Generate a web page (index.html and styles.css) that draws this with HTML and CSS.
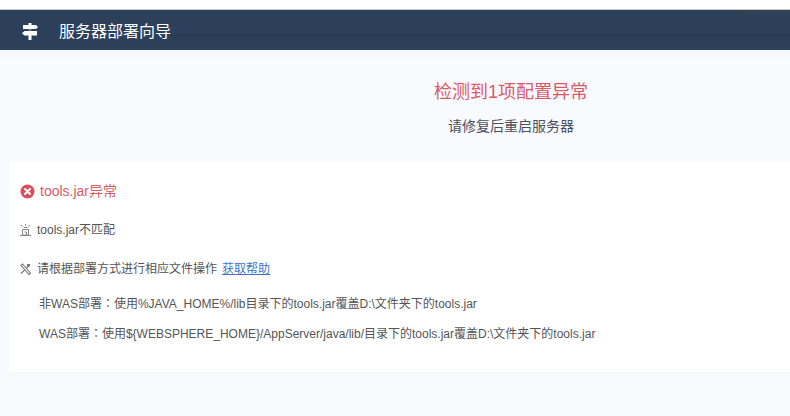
FILE: index.html
```html
<!DOCTYPE html>
<html lang="zh-CN">
<head>
    <meta charset="UTF-8">
    <meta name="viewport" content="width=device-width, initial-scale=1.0">
    <title>服务器部署向导</title>
    <link rel="stylesheet" href="styles.css">
</head>
<body>
    <header class="top-bar">
        <svg class="top-icon" width="16" height="17" viewBox="0 0 16 17">
            <path d="M6.500 0h3v2H14l2 2-2 2H9.500v2H15v4.500H9.500V17h-3v-4.500H2.500L0 10.250 2.500 8h4V6H1V2h5.500z" fill="#fff"/>
            <path d="M0 7h16" stroke="#2c3f5b" stroke-width="1.400"/>
        </svg>
        <span class="top-title">服务器部署向导</span>
    </header>

    <main class="page">
        <section class="summary">
            <h1>检测到1项配置异常</h1>
            <p>请修复后重启服务器</p>
        </section>

        <section class="detail-card">
            <h2 class="error-title">
                <svg width="15" height="15" viewBox="0 0 15 15">
                    <circle cx="7.500" cy="7.500" r="7" fill="#d9505c"/>
                    <path d="M5 5l5 5M10 5l-5 5" stroke="#fff" stroke-width="2" stroke-linecap="round"/>
                </svg>
                tools.jar异常
            </h2>

            <div class="info-row">
                <svg class="row-icon" width="11" height="12" viewBox="0 0 11 12">
                    <path d="M5.500 0v1.500M1 1l1.500 1.500M10 1L8.500 2.500M3.500 3.500h4M2.500 5.500h6V11h-6zM4.500 8h2v3M0 11.500h11" stroke="#888" stroke-width="1" fill="none"/>
                </svg>
                <span>tools.jar不匹配</span>
            </div>

            <div class="info-row">
                <svg class="row-icon" width="11" height="12" viewBox="0 0 11 12">
                    <path d="M1 2.500L2.500 1l8 9-1.500 1.500zM10 1.500L6.500 5M4.500 7L1 10.500" stroke="#777" stroke-width="1.100" fill="none"/>
                    <path d="M7 1h3v2.500H7z" fill="#8a7078"/>
                </svg>
                <span>请根据部署方式进行相应文件操作</span>
                <a href="#" class="help-link">获取帮助</a>
            </div>

            <p class="step first">非WAS部署<span class="colon" lang="zh-TW">：</span>使用%JAVA_HOME%/lib目录下的tools.jar覆盖D:\文件夹下的tools.jar</p>
            <p class="step">WAS部署<span class="colon" lang="zh-TW">：</span>使用${WEBSPHERE_HOME}/AppServer/java/lib/目录下的tools.jar覆盖D:\文件夹下的tools.jar</p>
        </section>
    </main>
</body>
</html>
```

FILE: styles.css
```css
* {
    box-sizing: border-box;
}

body {
    margin: 0;
    height: 416px;
    overflow: hidden;
    background-color: #f8f9fc;
    font-family: "Liberation Sans", "Noto Sans CJK SC", sans-serif;
    font-size: 12px;
    color: #555;
    display: flex;
    flex-direction: column;
    padding-top: 9px;
    background-image: linear-gradient(#fff 9px, transparent 9px);
}

.top-bar {
    position: relative;
    height: 41px;
    flex-shrink: 0;
    border-top: 1px solid #c9cbce;
    background-color: #2c3f5b;
    display: flex;
    align-items: center;
    padding-left: 22px;
}

/* thin line across the bar, after the title */
.top-bar::after {
    content: "";
    position: absolute;
    left: 170px;
    right: 0;
    top: 25px;
    height: 1px;
    background-color: #273750;
}

/* darker strip at the top right of the bar */
.top-bar::before {
    content: "";
    position: absolute;
    left: 737px;
    right: 0;
    top: 0;
    height: 3px;
    background-color: #343f50;
}

.top-icon {
    margin-top: 3px;
    margin-right: 21px;
}

.top-title {
    color: #fff;
    font-size: 16px;
}

.page {
    flex: 1;
}

.summary {
    height: 112px;
    padding-top: 29px;
    padding-left: 232px;
    text-align: center;
    background-color: #f9fafd;
    background-image: linear-gradient(#f6f9fe 12px, #fff 12px, #fff 13px, transparent 13px);
}

.summary h1 {
    margin: 0;
    font-size: 18px;
    font-weight: normal;
    line-height: 26px;
    color: #d95a64;
}

.summary p {
    margin: 12px 0 0;
    font-size: 14px;
    line-height: 18px;
    color: #4a4f5c;
}

.detail-card {
    margin-left: 9px;
    height: 210px;
    padding: 20px 0 0 11px;
    background-color: #fff;
}

.error-title {
    margin: 0;
    display: flex;
    align-items: center;
    gap: 5px;
    font-size: 14px;
    font-weight: normal;
    line-height: 18px;
    color: #d85c66;
}

.info-row {
    margin-top: 21px;
    display: flex;
    align-items: center;
    line-height: 18px;
}

.row-icon {
    margin-right: 6px;
}

.help-link {
    margin-left: 5px;
    color: #3f74c9;
    text-decoration: underline;
}

.step {
    margin: 0 0 0 19px;
    line-height: 18px;
}

.step.first {
    margin-top: 17px;
}

.step + .step {
    margin-top: 12px;
}

/* the reference centres the full-width colon in its cell */
.colon {
    font-family: "Noto Sans CJK TC", sans-serif;
    line-height: 0;
}
```
